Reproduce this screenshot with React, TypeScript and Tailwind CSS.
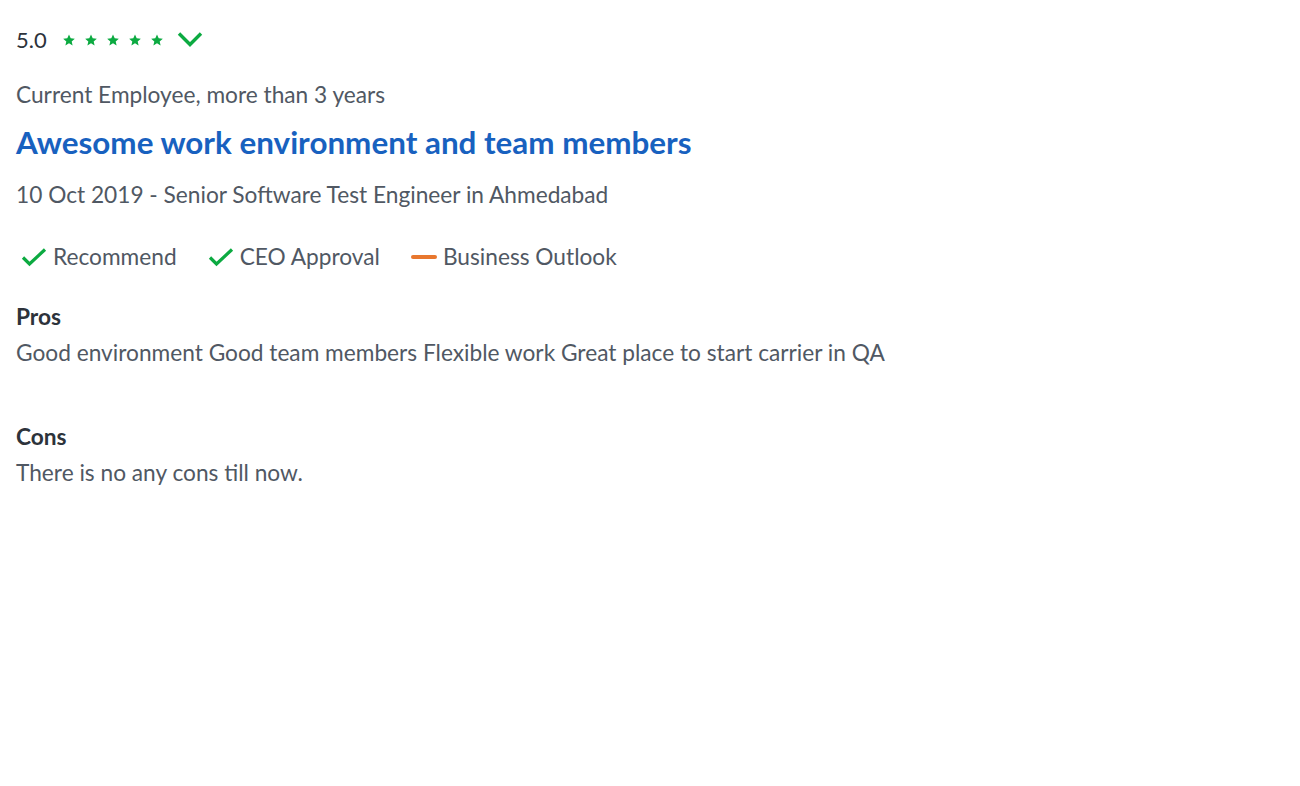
const Star = () => (
  <svg viewBox="0 0 24 24" className="h-[14px] w-[14px] fill-[#0caa41]">
    <path d="M12 2.5l2.9 6.6 7.1.6-5.4 4.7 1.6 7-6.2-3.7-6.2 3.7 1.6-7L2 9.7l7.1-.6z" />
  </svg>
);

const CheckMark = () => (
  <svg viewBox="0 0 26 20" className="h-[20px] w-[26px] mr-[6px]">
    <path d="M2 10.5l6.5 6.5L24 2.5" fill="none" stroke="#0caa41" strokeWidth="3.2" />
  </svg>
);

const App = () => {
  const items = [
    { label: "Recommend", type: "check" },
    { label: "CEO Approval", type: "check" },
    { label: "Business Outlook", type: "dash" },
  ];

  return (
    <div className="min-h-screen bg-white px-4 pt-[25px] font-['Lato',sans-serif] text-[#505863]">
      {/* Rating */}
      <div className="flex items-center h-[28px]">
        <span className="text-[22px] text-[#2d333b] mr-[15px]">5.0</span>
        <div className="flex gap-[8px] pt-[2px]">
          {[0, 1, 2, 3, 4].map((i) => (
            <Star key={i} />
          ))}
        </div>
        <svg viewBox="0 0 26 16" className="ml-[13px] h-[16px] w-[26px]">
          <path d="M2 2.5l11 11L24 2.5" fill="none" stroke="#0caa41" strokeWidth="3.4" />
        </svg>
      </div>

      <div className="mt-[28px] text-[22.7px] leading-[28px]">Current Employee, more than 3 years</div>

      <h2 className="mt-[15px] text-[31.4px] leading-[36px] font-bold text-[#1861bf]">
        Awesome work environment and team members
      </h2>

      <div className="mt-[21px] text-[22.7px] leading-[28px]">
        10 Oct 2019 - Senior Software Test Engineer in Ahmedabad
      </div>

      <div className="mt-[34px] flex items-center gap-[31px] text-[22.7px] leading-[28px] pl-[5px]">
        {items.map((item) => (
          <div key={item.label} className="flex items-center">
            {item.type === "check" ? (
              <CheckMark />
            ) : (
              <span className="mr-[6px] h-[4px] w-[26px] rounded-full bg-[#e8772e]" />
            )}
            {item.label}
          </div>
        ))}
      </div>

      <div className="mt-[32px] text-[22.7px] leading-[28px] font-bold text-[#2d333b]">Pros</div>
      <div className="mt-[8px] text-[22.7px] leading-[28px]">
        Good environment Good team members Flexible work Great place to start carrier in QA
      </div>

      <div className="mt-[56px] text-[22.7px] leading-[28px] font-bold text-[#2d333b]">Cons</div>
      <div className="mt-[8px] text-[22.7px] leading-[28px]">There is no any cons till now.</div>
    </div>
  );
};

export default App;
